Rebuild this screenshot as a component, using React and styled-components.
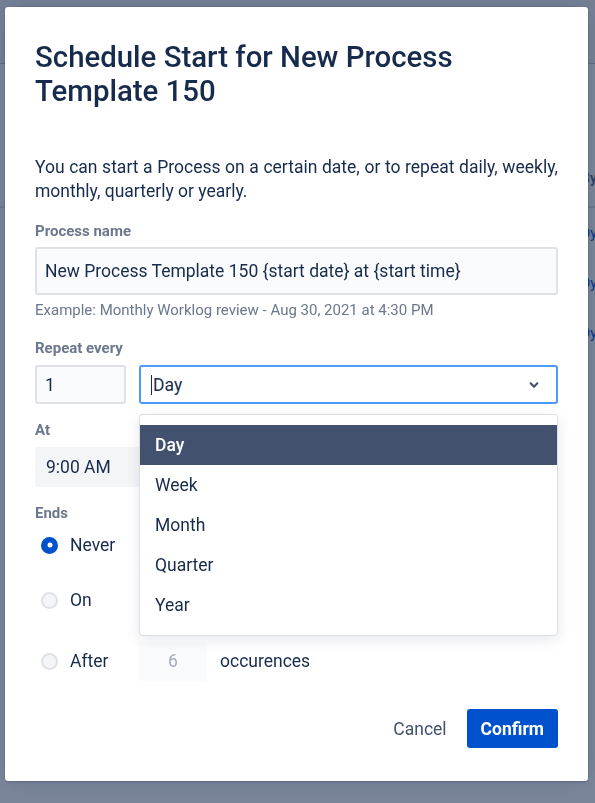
import React from "react";
import styled, { createGlobalStyle } from "styled-components";

const GlobalStyle = createGlobalStyle`
  * { box-sizing: border-box; }
  body {
    margin: 0;
    font-family: Roboto, "Noto Sans", "Liberation Sans", sans-serif;
    color: #172b4d;
  }
`;

const options = ["Day", "Week", "Month", "Quarter", "Year"];
const backgroundRows = ["Dyn", "Dyn", "Dyn"];

const App = () => {
  return (
    <>
      <GlobalStyle />
      <Page>
        <TopBar />
        <TableHead>By</TableHead>
        {backgroundRows.map((row, i) => (
          <TableRow key={i}>{row}</TableRow>
        ))}
      </Page>
      <Blanket>
        <Dialog>
          <Title>Schedule Start for New Process Template 150</Title>
          <Description>
            You can start a Process on a certain date, or to repeat daily,
            weekly, monthly, quarterly or yearly.
          </Description>

          <Label $top={20}>Process name</Label>
          <TextField>New Process Template 150 {"{start date}"} at {"{start time}"}</TextField>
          <Helper>Example: Monthly Worklog review - Aug 30, 2021 at 4:30 PM</Helper>

          <Label $top={22}>Repeat every</Label>
          <RepeatRow>
            <NumberField>1</NumberField>
            <SelectWrap>
              <Select>
                <Caret />
                <span>Day</span>
                <Chevron viewBox="0 0 24 24">
                  <path d="M8 10l4 4 4-4" />
                </Chevron>
              </Select>
              <Menu>
                {options.map((opt) => (
                  <Option key={opt} $active={opt === "Day"}>
                    {opt}
                  </Option>
                ))}
              </Menu>
            </SelectWrap>
          </RepeatRow>

          <Label $top={18}>At</Label>
          <TimeField>9:00 AM</TimeField>

          <Label $top={18}>Ends</Label>
          <RadioRow $top={4}>
            <Radio $checked />
            <RadioLabel>Never</RadioLabel>
          </RadioRow>
          <RadioRow $top={15}>
            <Radio />
            <RadioLabel>On</RadioLabel>
          </RadioRow>
          <RadioRow $top={21}>
            <Radio />
            <RadioLabel>After</RadioLabel>
            <CountField>6</CountField>
            <Suffix>occurences</Suffix>
          </RadioRow>

          <Footer>
            <SubtleButton>Cancel</SubtleButton>
            <PrimaryButton>Confirm</PrimaryButton>
          </Footer>
        </Dialog>
      </Blanket>
    </>
  );
};

const Page = styled.div`
  min-height: 803px;
  background: #ffffff;
`;

const TopBar = styled.div`
  height: 64px;
  border-bottom: 1px solid #c1c7d0;
  background: #f4f5f7;
`;

const TableHead = styled.div`
  display: flex;
  align-items: center;
  height: 144px;
  padding: 86px 0 0 581px;
  border-bottom: 2px solid #dfe1e6;
  font-size: 14px;
  font-weight: 600;
  color: #5e6c84;
`;

const TableRow = styled.div`
  display: flex;
  align-items: center;
  height: 50px;
  padding-left: 581px;
  font-size: 14px;
  color: #0052cc;
  white-space: nowrap;
  overflow: hidden;
`;

const Blanket = styled.div`
  position: fixed;
  inset: 0;
  background: rgba(9, 30, 66, 0.54);
  padding: 7px 7px 0 5px;
`;

const Dialog = styled.div`
  width: 583px;
  height: 774px;
  background: #ffffff;
  border-radius: 3px;
  box-shadow: 0 0 0 1px rgba(9, 30, 66, 0.08), 0 2px 1px rgba(9, 30, 66, 0.08),
    0 0 20px -6px rgba(9, 30, 66, 0.31);
  padding: 33px 30px 33px;
  display: flex;
  flex-direction: column;
`;

const Title = styled.h2`
  margin: 0;
  font-size: 29.4px;
  line-height: 34px;
  font-weight: 500;
  color: #172b4d;
`;

const Description = styled.p`
  margin: 47px 0 0;
  font-size: 17.5px;
  line-height: 24px;
  text-align: justify;
  color: #172b4d;
`;

const Label = styled.div`
  margin-top: ${(p) => p.$top}px;
  font-size: 15px;
  line-height: 16px;
  font-weight: 700;
  color: #6b778c;
`;

const fieldBase = `
  display: flex;
  align-items: center;
  border-radius: 3px;
  font-size: 17.5px;
  color: #172b4d;
`;

const TextField = styled.div`
  ${fieldBase}
  margin-top: 8px;
  height: 48px;
  padding: 0 8px;
  background: #fafbfc;
  border: 2px solid #dfe1e6;
`;

const Helper = styled.div`
  margin-top: 7px;
  font-size: 15px;
  line-height: 16px;
  color: #6b778c;
`;

const RepeatRow = styled.div`
  display: flex;
  gap: 13px;
  margin-top: 9px;
  height: 39px;
`;

const NumberField = styled.div`
  ${fieldBase}
  width: 91px;
  padding: 0 8px;
  background: #fafbfc;
  border: 2px solid #dfe1e6;
`;

const SelectWrap = styled.div`
  position: relative;
  flex: 1;
`;

const Select = styled.div`
  ${fieldBase}
  height: 100%;
  padding: 0 12px 0 10px;
  background: #ffffff;
  border: 2px solid #4c9aff;
`;

const Caret = styled.span`
  width: 1px;
  height: 20px;
  margin-right: 1px;
  background: #172b4d;
`;

const Chevron = styled.svg`
  width: 20px;
  height: 20px;
  margin-left: auto;
  fill: none;
  stroke: #42526e;
  stroke-width: 2.6;
  stroke-linecap: round;
  stroke-linejoin: round;
`;

const Menu = styled.div`
  position: absolute;
  top: calc(100% + 10px);
  left: 0;
  right: 0;
  z-index: 2;
  padding: 10px 0;
  background: #ffffff;
  border: 1px solid rgba(9, 30, 66, 0.14);
  border-radius: 4px;
  box-shadow: 0 4px 14px rgba(9, 30, 66, 0.1);
`;

const Option = styled.div`
  display: flex;
  align-items: center;
  height: 40px;
  padding: 0 15px;
  font-size: 17.5px;
  font-weight: ${(p) => (p.$active ? 500 : 400)};
  color: ${(p) => (p.$active ? "#ffffff" : "#172b4d")};
  background: ${(p) => (p.$active ? "#42526e" : "transparent")};
`;

const TimeField = styled.div`
  ${fieldBase}
  margin-top: 9px;
  width: 170px;
  height: 40px;
  padding: 0 11px;
  background: #f4f5f7;
`;

const RadioRow = styled.div`
  display: flex;
  align-items: center;
  margin-top: ${(p) => p.$top}px;
  min-height: 40px;
`;

const Radio = styled.span`
  position: relative;
  width: 17px;
  height: 17px;
  margin-left: 6px;
  border-radius: 50%;
  background: ${(p) => (p.$checked ? "#0052cc" : "#f4f5f7")};
  border: 2px solid ${(p) => (p.$checked ? "#0052cc" : "#dfe1e6")};

  &::after {
    content: "";
    position: absolute;
    top: 50%;
    left: 50%;
    width: 5px;
    height: 5px;
    border-radius: 50%;
    transform: translate(-50%, -50%);
    background: ${(p) => (p.$checked ? "#ffffff" : "transparent")};
  }
`;

const RadioLabel = styled.span`
  width: 69px;
  margin-left: 12px;
  font-size: 17.5px;
  color: #172b4d;
`;

const CountField = styled.div`
  ${fieldBase}
  justify-content: center;
  width: 68px;
  height: 39px;
  background: #fafbfc;
  color: #a5adba;
`;

const Suffix = styled.span`
  margin-left: 13px;
  font-size: 17.5px;
  color: #172b4d;
`;

const Footer = styled.div`
  margin-top: auto;
  display: flex;
  justify-content: flex-end;
  gap: 8px;
`;

const buttonBase = `
  height: 39px;
  border: none;
  border-radius: 3px;
  font-family: inherit;
  font-size: 17.5px;
  cursor: pointer;
`;

const SubtleButton = styled.button`
  ${buttonBase}
  padding: 0 12px;
  background: transparent;
  color: #42526e;
  font-weight: 400;
`;

const PrimaryButton = styled.button`
  ${buttonBase}
  padding: 0 14px;
  background: #0052cc;
  color: #ffffff;
  font-weight: 700;
`;

export default App;
